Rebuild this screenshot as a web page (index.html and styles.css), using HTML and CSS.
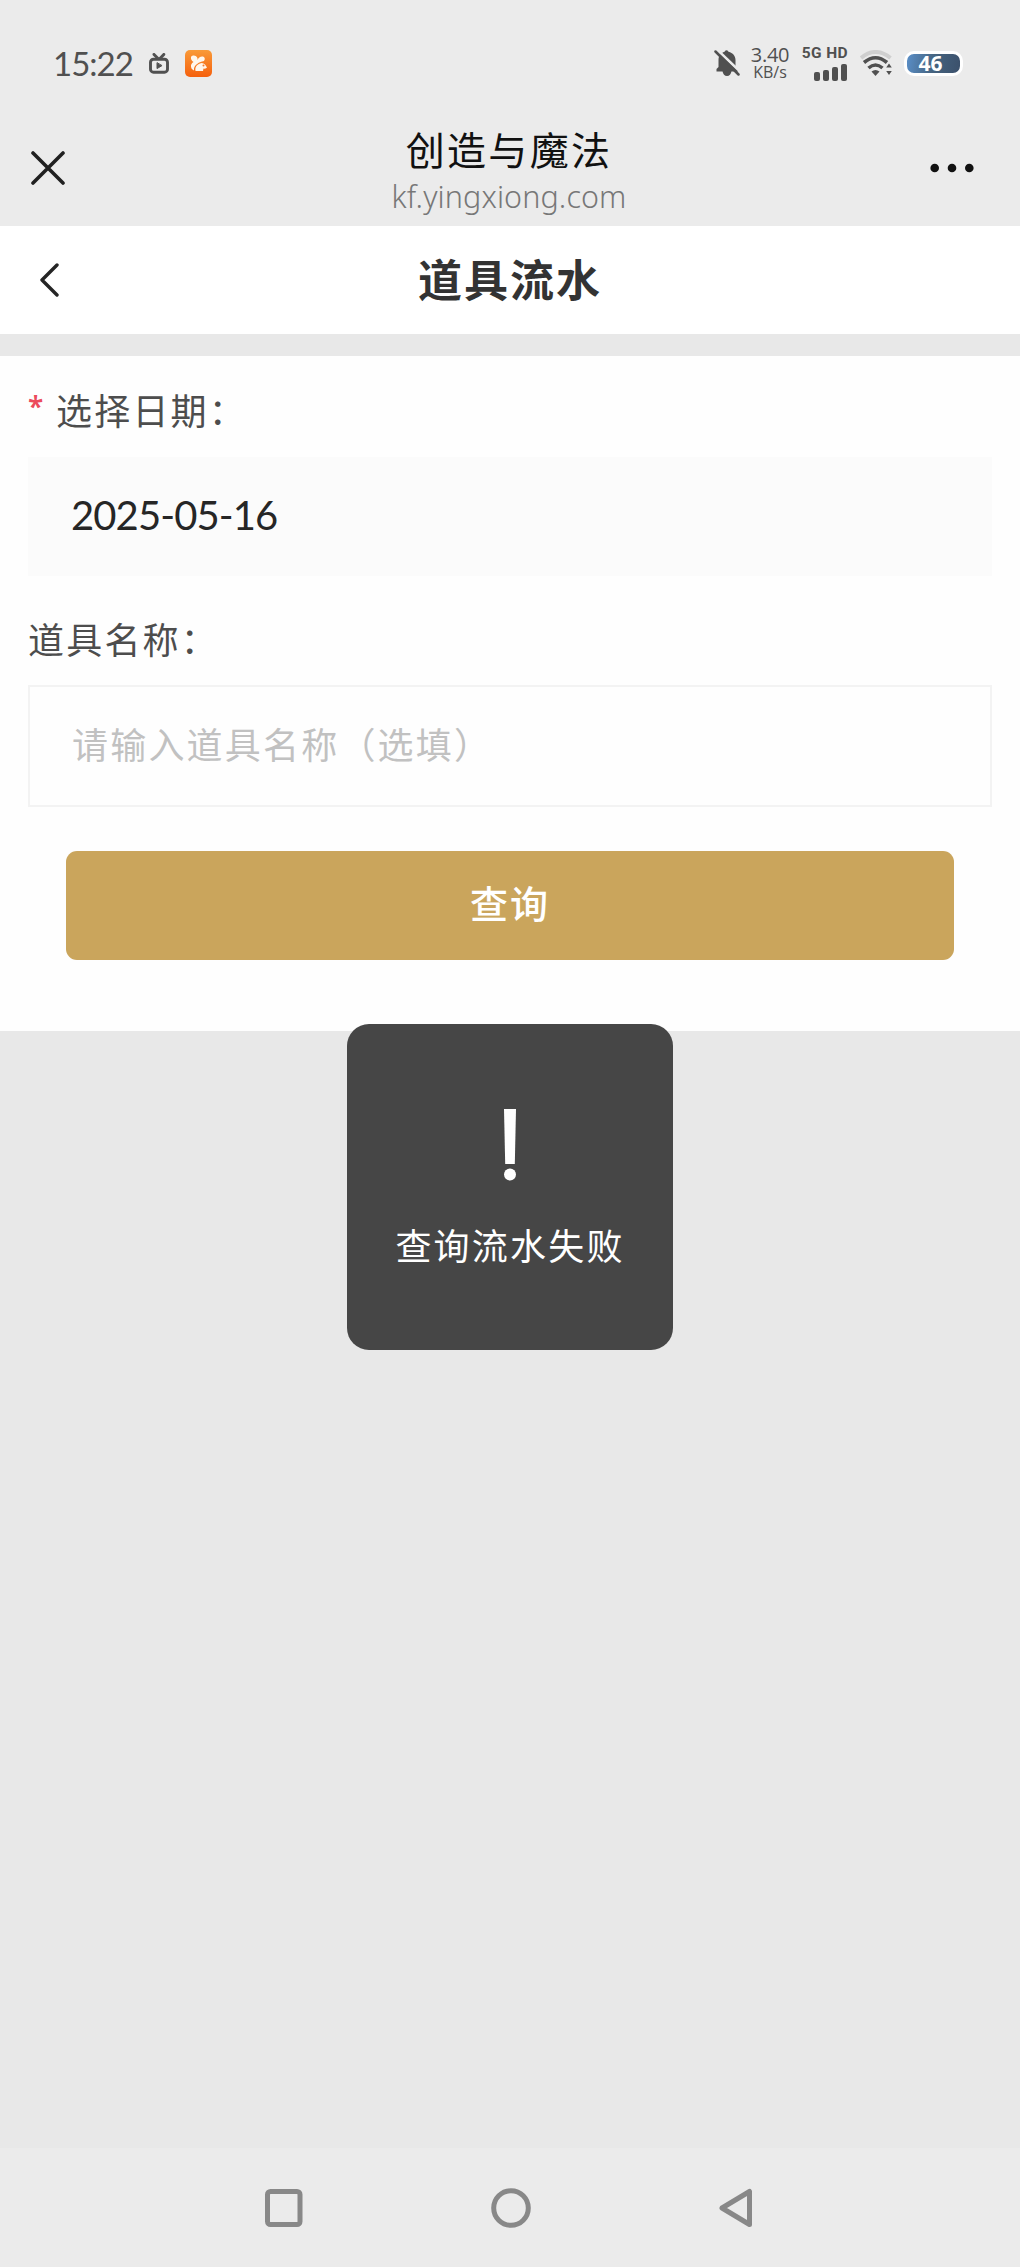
FILE: index.html
```html
<!DOCTYPE html>
<html lang="zh-CN">
<head>
<meta charset="utf-8">
<title>道具流水</title>
<link rel="stylesheet" href="styles.css">
</head>
<body>
<div class="screen">
  <div class="status">
    <span class="time">15:22</span>
    <svg class="tv" width="20" height="21" viewBox="0 0 20 21" fill="none" stroke="#505050" stroke-width="2.9" stroke-linecap="round" stroke-linejoin="round"><rect x="1.5" y="6.2" width="17" height="13" rx="3"/><path d="M5 1.4L9 5.5M14.8 1.4L11 5.5"/><path d="M8 10v5.6l4.7-2.8z" fill="#505050" stroke-width="1"/></svg>
    <svg class="uc" width="27" height="27" viewBox="0 0 27 27"><defs><linearGradient id="orange" x1="0" y1="0" x2="0" y2="1"><stop offset="0" stop-color="#f99a38"/><stop offset="1" stop-color="#f5600d"/></linearGradient></defs><rect width="27" height="27" rx="5" fill="url(#orange)"/><path d="M6 7Q6.500 5 9 5.500Q13 6 12.500 10Q14 6 18 6.500Q21 8 19 11Q13 12 10 16Q8.500 18 9 20.500Q5.500 19 6 15Q7 12.500 8.500 12Q5.500 10 6 7Z" fill="#fff6ec"/><path d="M10.500 21Q9.500 17 13 14.500Q17 11.500 20 14.500L22 17.500Q21 19 18.500 18.500L18 21Z" fill="#fff6ec"/><circle cx="18.500" cy="15.500" r="1" fill="#f5792a"/></svg>
    <span class="spacer"></span>
    <svg class="bell" width="26" height="28" viewBox="0 0 26 28"><path d="M2.500 22.500V20L4.500 18V11C4.500 6.500 7 3.800 10.500 2.700Q12.500-.2 14.500 2.700C19 3.800 21.500 7 21.500 11V18L24 20.500V22.500Z" fill="#505050"/><path d="M8.500 22h9q-.8 5-4.500 5T8.500 22Z" fill="#505050"/><path d="M3 .500L27.500 24" stroke="#ebebeb" stroke-width="2.600"/><path d="M1.500 2.500L24.500 25.500" stroke="#505050" stroke-width="2.500" stroke-linecap="round"/></svg>
    <span class="rate"><span class="rate-num">3.40</span><span class="rate-unit">KB/s</span></span>
    <span class="cell"><span class="cell-text">5G HD</span><svg width="34" height="17" viewBox="0 0 34 17" fill="#505050"><rect y="8" width="6" height="9" rx="2"/><rect x="9" y="6" width="6" height="11" rx="2"/><rect x="18" y="3" width="6" height="14" rx="2"/><rect x="27" y="0" width="6" height="17" rx="2"/></svg></span>
    <svg class="wifi" width="33" height="27" viewBox="0 0 33 27" fill="none" stroke-linecap="butt"><path d="M1 8Q15.500-4 30.500 8" stroke="#cfcfcf" stroke-width="4"/><path d="M4 12.500Q15.500 3 27 12.500" stroke="#505050" stroke-width="3.600"/><path d="M8.500 18Q15.500 12 22.500 18" stroke="#505050" stroke-width="3.600"/><path d="M11.500 21.500Q15.500 18.500 19.500 21.500L15.500 26Z" fill="#505050"/><path d="M29 13.500l2.800 4h-5.600zM29 25l2.800-4h-5.600z" fill="#505050"/></svg>
    <span class="battery">46</span>
  </div>
  <header class="webbar">
    <svg width="34" height="34" viewBox="0 0 34 34" stroke="#202020" stroke-width="3.600" stroke-linecap="round"><path d="M2 2L32 32M32 2L2 32"/></svg>
    <div class="site"><div class="site-name">创造与魔法</div><div class="site-url">kf.yingxiong.com</div></div>
    <svg width="44" height="10" viewBox="0 0 44 10" fill="#111"><circle cx="4.700" cy="5" r="4.300"/><circle cx="22" cy="5" r="4.300"/><circle cx="39.300" cy="5" r="4.300"/></svg>
  </header>
  <div class="titlebar">
    <svg width="19" height="34" viewBox="0 0 19 34" fill="none" stroke="#252525" stroke-width="3.400" stroke-linecap="round" stroke-linejoin="round"><path d="M17 2L2 17L17 32"/></svg>
    <h1>道具流水</h1>
    <span></span>
  </div>
  <main class="form">
    <div class="label"><span class="star">*</span>选择日期：</div>
    <div class="date">2025-05-16</div>
    <div class="label label-name">道具名称：</div>
    <div class="input">请输入道具名称（选填）</div>
    <div class="button">查询</div>
  </main>
  <footer class="keys">
    <svg width="38" height="40" viewBox="0 0 38 40" fill="none" stroke="#888" stroke-width="5"><rect x="2.500" y="3.500" width="32.500" height="33" rx="3"/></svg>
    <svg width="40" height="40" viewBox="0 0 40 40" fill="none" stroke="#888" stroke-width="5"><circle cx="20" cy="20" r="17.300"/></svg>
    <svg width="34" height="40" viewBox="0 0 34 40" fill="none" stroke="#888" stroke-width="5" stroke-linejoin="round"><path d="M30.500 3.500V36.500L3 20Z"/></svg>
  </footer>
  <div class="toast">
    <svg width="14" height="72" viewBox="0 0 14 72" fill="#fff"><path d="M1 0h12l-1.200 55H2.200z"/><circle cx="7" cy="65.500" r="6"/></svg>
    <div class="toast-text">查询流水失败</div>
  </div>
</div>
</body>
</html>
```
FILE: styles.css
```css
* { box-sizing: border-box; }
body { margin: 0; font-family: "Noto Sans", "Noto Sans CJK SC", sans-serif; background: #e8e8e8; }
svg { display: block; flex: none; }
.screen { position: relative; width: 1020px; height: 2267px; display: flex; flex-direction: column; background: #e8e8e8; }
.status { height: 126px; display: flex; align-items: center; padding: 0 56px 0 53px; background: #ebebeb; color: #505050; }
.time { width: 96px; font: 33px/40px Lato, sans-serif; letter-spacing: -1px; white-space: nowrap; }
.uc { margin-left: 16px; }
.spacer { flex: 1; }
.rate { width: 40px; margin-left: 10px; display: flex; flex-direction: column; align-items: center; white-space: nowrap; }
.rate-num { font: 20px/19px "Open Sans", sans-serif; letter-spacing: -.3px; }
.rate-unit { font: 16px/17px "Open Sans", sans-serif; }
.cell { width: 48px; margin-left: 10px; display: flex; flex-direction: column; align-items: flex-end; gap: 3px; }
.cell-text { font: 700 15.500px/16px Roboto, sans-serif; letter-spacing: .4px; white-space: nowrap; }
.wifi { margin-left: 12px; }
.battery { width: 59px; height: 25px; margin-left: 11px; margin-right: 1px; border: 3px solid #fff; border-radius: 10px; background: linear-gradient(100deg, #5a8fc8, #45637f 50%, #3b506b); color: #fff; font: 700 21px/18px "Noto Sans", sans-serif; text-align: center; padding-right: 6px; }
.webbar { height: 100px; display: flex; justify-content: space-between; padding: 25px 46px 0 31px; background: #ebebeb; }
.webbar > svg:last-child { margin-top: 12px; }
.site { width: 300px; margin-top: -28px; margin-left: 23px; text-align: center; white-space: nowrap; }
.site-name { height: 55px; color: #111; font: 39px/50px "Noto Sans CJK SC", sans-serif; letter-spacing: 2.300px; }
.site-url { color: #777; font-weight: 300; font-size: 30.500px; line-height: 36px; letter-spacing: .1px; }
.titlebar { height: 108px; display: grid; grid-template-columns: 1fr auto 1fr; align-items: center; padding: 0 40px; background: #fff; }
.titlebar h1 { margin: -4px 0 0; color: #333; font: 700 44px/60px "Noto Sans CJK SC", sans-serif; letter-spacing: 2px; }
.form { height: 675px; margin-top: 22px; padding: 28px 28px 0; background: #fefefe; }
.label { height: 73px; display: flex; color: #4d4d4d; font: 36px/50px "Noto Sans CJK SC", sans-serif; letter-spacing: 2.200px; }
.star { width: 28px; color: #ec4b5c; font: 600 28px/45px "Noto Sans", sans-serif; }
.date { height: 119px; padding: 0 43px; background: #fbfbfb; color: #262626; font: 40px/116px Lato, sans-serif; letter-spacing: -.9px; }
.label-name { height: 82px; margin-top: 37px; line-height: 51px; margin-bottom: -10px; }
.input { height: 122px; padding: 0 42px; border: 2px solid #f3f3f3; color: #c1c1c1; font: 36px/113px "Noto Sans CJK SC", sans-serif; letter-spacing: 2.200px; }
.button { height: 109px; margin: 44px 38px 0; border-radius: 11px; background: #caa55c; color: #fff; text-align: center; font: 500 38px/102px "Noto Sans CJK SC", sans-serif; letter-spacing: 2px; }
.keys { height: 119px; margin-top: auto; padding: 0 267px 0 265px; display: flex; align-items: center; justify-content: space-between; background: #ebebeb; }
.toast { position: absolute; left: 347px; top: 1024px; width: 326px; height: 326px; border-radius: 22px; background: #464646; color: #fff; display: flex; flex-direction: column; align-items: center; padding-top: 85px; }
.toast-text { margin-top: 38px; font: 36px/50px "Noto Sans CJK SC", sans-serif; letter-spacing: 2.200px; white-space: nowrap; }
```
